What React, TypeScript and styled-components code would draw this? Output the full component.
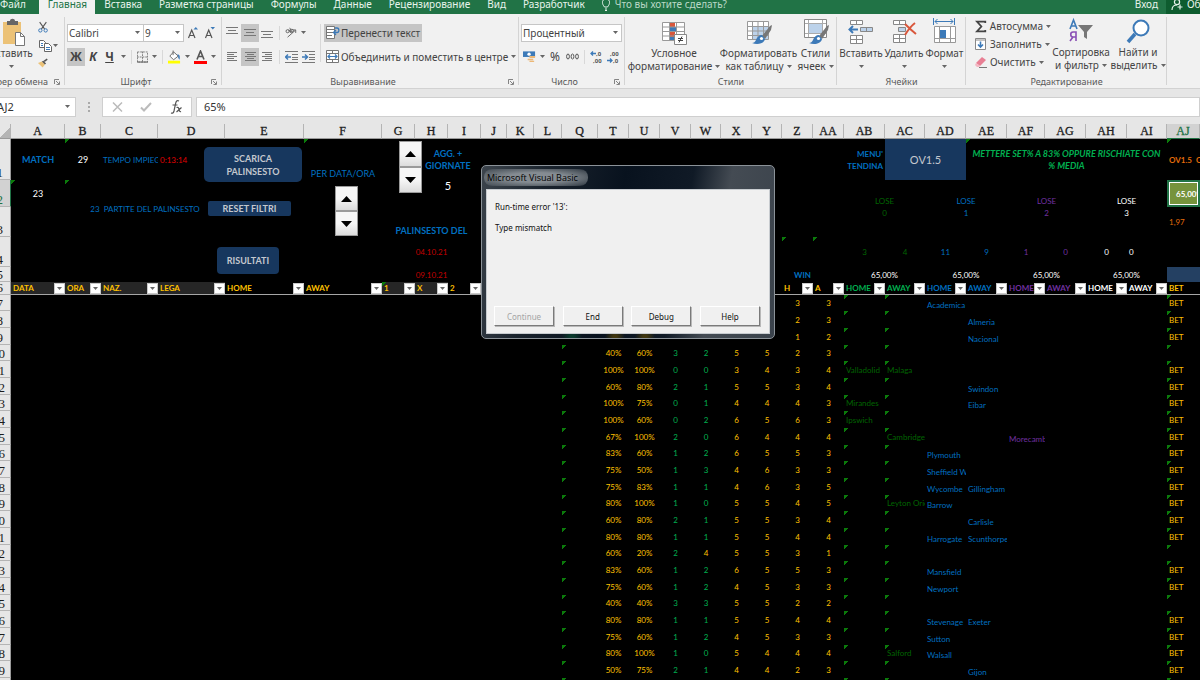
import React from "react";
import styled, { createGlobalStyle, css } from "styled-components";

const UI = '"Noto Sans", "Open Sans", sans-serif';
const CELL = 'Lato, "Open Sans", sans-serif';
const SERIF = '"Liberation Serif", serif';

const BLUE = "#0070c0";
const GREEN = "#00b050";
const DARK_GREEN = "#006400";
const GOLD = "#ffc000";
const PURPLE = "#7030a0";
const ORANGE = "#e26b0a";
const NAVY = "#17375e";

const GlobalStyle = createGlobalStyle`
  * { box-sizing: border-box; }
  body { margin: 0; background: #000; font-family: ${UI}; overflow: hidden; }
  button, input, select { font: inherit; color: inherit; margin: 0; }
`;

const Window = styled.div`
  position: relative;
  display: flex;
  flex-direction: column;
  height: 100vh;
  overflow: hidden;
  background: #000;
`;

/* ---------- tabs ---------- */

const TabBar = styled.nav`
  display: flex;
  flex: none;
  height: 14px;
  background: #217346;
  color: #e8f3ec;
  font-size: 10px;
  line-height: 8px;
`;

const Tab = styled.button<{ $active?: boolean }>`
  height: 14px;
  border: 0;
  padding: 0 8px 6px 9px;
  white-space: nowrap;
  background: ${(p) => (p.$active ? "#f1f1f1" : "transparent")};
  color: ${(p) => (p.$active ? "#217346" : "#e8f3ec")};
`;

const FileTab = styled(Tab)`
  padding: 0 13px 6px 0;
`;

const TellMe = styled(Tab)`
  display: flex;
  gap: 5px;
  color: #b9d8c6;
`;

const Spacer = styled.div`
  flex: 1;
`;

const Share = styled(Tab)`
  display: flex;
  gap: 4px;
  width: 34px;
  padding: 0 0 6px 5px;
  overflow: hidden;
  background: #0e5c2f;
  svg {
    flex: none;
  }
`;

/* ---------- ribbon ---------- */

const Ribbon = styled.div`
  display: flex;
  flex: none;
  height: 75px;
  background: #f1f1f1;
  border-bottom: 1px solid #d2d2d2;
  color: #444;
  font-size: 10px;
  overflow: hidden;
`;

const Group = styled.section<{ $w: number }>`
  display: flex;
  flex-direction: column;
  flex: none;
  width: ${(p) => p.$w}px;
  position: relative;
  padding: 0 2px;
  &::after {
    content: "";
    position: absolute;
    right: 0;
    top: 3px;
    bottom: 3px;
    width: 1px;
    background: #d4d4d4;
  }
`;

const GroupBody = styled.div<{ $top?: number; $gap?: number }>`
  display: flex;
  height: 61px;
  padding-top: ${(p) => p.$top ?? 10}px;
  gap: ${(p) => p.$gap ?? 0}px;
`;

const GroupLabel = styled.footer<{ $end?: boolean }>`
  display: flex;
  align-items: center;
  height: 13px;
  font-size: 9px;
  line-height: 13px;
  color: #5a5a5a;
  white-space: nowrap;
  span {
    flex: 1;
    min-width: 0;
    display: flex;
    justify-content: ${(p) => (p.$end ? "flex-end" : "center")};
  }
  svg {
    flex: none;
    margin: 0 3px 0 6px;
  }
`;

const Stack = styled.div<{ $gap?: number }>`
  display: flex;
  flex-direction: column;
  gap: ${(p) => p.$gap ?? 7}px;
`;

const ToolRow = styled.div`
  display: flex;
  align-items: center;
  height: 17px;
`;

const Tool = styled.button<{ $w?: number; $on?: boolean }>`
  display: flex;
  align-items: center;
  justify-content: center;
  gap: 1px;
  width: ${(p) => (p.$w ? p.$w + "px" : "auto")};
  height: 18px;
  padding: 0 2px;
  border: 0;
  background: ${(p) => (p.$on ? "#c5c5c5" : "transparent")};
  white-space: nowrap;
  flex: none;
`;

const CaretTool = styled(Tool)`
  padding: 0;
`;

const Glyph = styled.span<{ $bold?: boolean; $italic?: boolean; $under?: boolean }>`
  font-size: 12px;
  line-height: 12px;
  font-weight: ${(p) => (p.$bold ? 700 : 400)};
  font-style: ${(p) => (p.$italic ? "italic" : "normal")};
  text-decoration: ${(p) => (p.$under ? "underline" : "none")};
`;

const Divider = styled.i<{ $h?: number }>`
  width: 1px;
  height: ${(p) => p.$h ?? 14}px;
  margin: 0 3px;
  background: #d8d8d8;
  flex: none;
`;

const Combo = styled.label<{ $w: number }>`
  display: flex;
  align-items: center;
  width: ${(p) => p.$w}px;
  height: 18px;
  padding-right: 3px;
  border: 1px solid #c6c6c6;
  background: #fff;
  & + & {
    border-left: 0;
  }
  select {
    flex: 1;
    min-width: 0;
    appearance: none;
    border: 0;
    padding: 0 0 0 1px;
    background: transparent;
    outline: 0;
  }
`;

const BigTool = styled.button<{ $w: number }>`
  display: flex;
  flex-direction: column;
  align-items: center;
  flex: none;
  width: ${(p) => p.$w}px;
  height: 57px;
  padding: 0;
  border: 0;
  background: transparent;
  line-height: 13px;
  white-space: nowrap;
  svg.big {
    height: 28px;
    margin-bottom: 1px;
    flex: none;
  }
  span {
    display: flex;
    align-items: center;
    gap: 3px;
    min-height: 13px;
  }
`;

const PasteArea = styled.div`
  display: flex;
  justify-content: flex-end;
  width: 31px;
  flex: none;
`;

const EditButton = styled(Tool)`
  justify-content: flex-start;
  padding: 0;
  gap: 3px;
`;

/* ---------- formula bar ---------- */

const FormulaBar = styled.div`
  display: flex;
  align-items: center;
  flex: none;
  height: 35px;
  background: #e6e6e6;
  color: #333;
  font-size: 11px;
`;

const Box = styled.div<{ $w?: number }>`
  display: flex;
  align-items: center;
  height: 20px;
  border: 1px solid #cfcfcf;
  background: #fff;
  overflow: hidden;
  ${(p) => (p.$w ? css`flex: none; width: ${p.$w}px;` : css`flex: 1;`)}
  input {
    flex: 1;
    min-width: 0;
    border: 0;
    outline: 0;
    background: transparent;
    padding: 0 0 0 7px;
  }
`;

const NameBox = styled(Box)`
  border-left: 0;
  padding-right: 5px;
  input {
    padding: 0;
    text-indent: -3px;
  }
`;

const Dots = styled.div`
  display: flex;
  flex-direction: column;
  gap: 2px;
  width: 26px;
  align-items: center;
  i {
    width: 2px;
    height: 2px;
    background: #aaa;
  }
`;

const FxButtons = styled(Box)`
  justify-content: space-around;
  margin-right: 4px;
`;

/* ---------- sheet ---------- */

const Sheet = styled.main`
  position: relative;
  flex: 1;
  min-height: 0;
  overflow: hidden;
  background: #000;
`;

const Grid = styled.table`
  width: 100%;
  table-layout: fixed;
  border-collapse: separate;
  border-spacing: 0;
  font-family: ${CELL};
  font-size: 8px;
  line-height: 12px;
  color: ${GOLD};
`;

const ColHead = styled.th<{ $sel?: boolean }>`
  height: 15px;
  padding: 1px 0 0;
  overflow: hidden;
  font: 400 12px/13px ${SERIF};
  color: ${(p) => (p.$sel ? "#217346" : "#1c1c1c")};
  background: ${(p) => (p.$sel ? "#d2d2d2" : "#e6e6e6")};
  border-right: 1px solid #b4b4b4;
  border-bottom: 1px solid ${(p) => (p.$sel ? "#217346" : "#9a9a9a")};
  -webkit-text-stroke: 0.3px currentColor;
`;

const Corner = styled(ColHead)`
  background: linear-gradient(135deg, #e6e6e6 58%, #b4b4b4 58%);
`;

const RowHead = styled.th<{ $sel?: boolean }>`
  padding: 0;
  vertical-align: bottom;
  font: 400 13px/14px ${SERIF};
  color: ${(p) => (p.$sel ? "#217346" : "#1c1c1c")};
  background: ${(p) => (p.$sel ? "#d2d2d2" : "#e6e6e6")};
  border-bottom: 1px solid #b4b4b4;
  border-right: 1px solid ${(p) => (p.$sel ? "#217346" : "#9a9a9a")};
`;

const RowNumber = styled.div<{ $pad: number }>`
  display: flex;
  justify-content: flex-end;
  height: 12px;
  line-height: 12px;
  padding-right: ${(p) => p.$pad}px;
  overflow: hidden;
`;

type Look = {
  $c?: string;
  $bg?: string;
  $h?: "left" | "center" | "right";
  $v?: "top" | "middle" | "bottom";
  $bold?: boolean;
  $italic?: boolean;
  $size?: number;
  $flag?: boolean;
  $wrap?: boolean;
  $active?: boolean;
};

const Td = styled.td<Look>`
  padding: ${(p) => (p.$h ? "0 2px" : "0 0 0 2px")};
  overflow: hidden;
  white-space: ${(p) => (p.$wrap ? "pre-line" : "pre")};
  color: ${(p) => p.$c ?? GOLD};
  background-color: ${(p) => p.$bg ?? "transparent"};
  text-align: ${(p) => p.$h ?? "left"};
  vertical-align: ${(p) => p.$v ?? "middle"};
  font-weight: ${(p) => (p.$bold ? 700 : 400)};
  font-style: ${(p) => (p.$italic ? "italic" : "normal")};
  font-size: ${(p) => p.$size ?? 8}px;
  ${(p) => p.$flag && css`background-image: linear-gradient(135deg, #0b7a0b 3px, transparent 3px);`}
  ${(p) => p.$active && css`border: 2px solid #217346; box-shadow: inset 0 0 0 1px #fff; padding-left: 7px;`}
`;

const Tr = styled.tr<{ $h: number }>`
  height: ${(p) => p.$h}px;
`;

const FilterTh = styled.th<{ $c?: string; $shade?: boolean; $flag?: boolean }>`
  padding: 0;
  overflow: hidden;
  color: ${(p) => p.$c ?? GOLD};
  background-color: ${(p) => (p.$shade ? "#262626" : "#000")};
  border-bottom: 1px solid #a6a6a6;
  font-size: 8px;
  font-weight: 700;
  ${(p) => p.$flag && css`background-image: linear-gradient(135deg, #0b7a0b 3px, transparent 3px);`}
  div {
    display: flex;
    justify-content: space-between;
    align-items: center;
    height: 12px;
    padding-left: 2px;
    white-space: nowrap;
  }
`;

const FilterButton = styled.button`
  display: flex;
  align-items: center;
  justify-content: center;
  flex: none;
  width: 11px;
  height: 11px;
  padding: 0;
  border: 1px solid #c8c8c8;
  background: #fff;
`;

const Shape = styled.button<{ $x: number; $y: number; $w: number; $h: number; $r: number }>`
  position: absolute;
  left: ${(p) => p.$x}px;
  top: ${(p) => p.$y}px;
  width: ${(p) => p.$w}px;
  height: ${(p) => p.$h}px;
  padding: 0;
  border: 0;
  border-radius: ${(p) => p.$r}px;
  background: ${NAVY};
  color: #c4c8ce;
  font: 700 9px/13px ${CELL};
  white-space: pre-line;
`;

const Spinner = styled.div<{ $x: number; $y: number; $h: number }>`
  position: absolute;
  left: ${(p) => p.$x}px;
  top: ${(p) => p.$y}px;
  display: flex;
  flex-direction: column;
  width: 23px;
  height: ${(p) => p.$h}px;
  button {
    flex: 1;
    display: flex;
    align-items: center;
    justify-content: center;
    padding: 0;
    border: 1px solid #9a9a9a;
    background: linear-gradient(#f6f6f6 50%, #dcdcdc);
  }
`;

/* ---------- dialog ---------- */

const Dialog = styled.div`
  position: absolute;
  left: 481px;
  top: 165px;
  width: 294px;
  display: flex;
  flex-direction: column;
  padding: 0 4px 4px;
  border: 1px solid #8b9298;
  border-radius: 5px;
  background:
    radial-gradient(circle at 90px 171px, #0a3a2c 0 2px, transparent 10px),
    radial-gradient(circle at 133px 171px, #40360f 0 2px, transparent 10px),
    radial-gradient(circle at 163px 171px, #40360f 0 2px, transparent 10px),
    linear-gradient(100deg, #3c444c 0, #1a232d 20%, #08121e 45%, #101a26 66%, #444b53 78%, #3a424b 100%);
  color: #111;
  font-family: ${UI};
  font-size: 8px;
`;

const DialogTitle = styled.h1`
  align-self: flex-start;
  margin: 3px 0 3px -2px;
  padding: 0 10px 0 3px;
  border-radius: 8px;
  font: 400 9px/17px "Open Sans", sans-serif;
  color: #000;
  background: radial-gradient(ellipse at center, #858c92 40%, rgba(100, 108, 115, 0.6) 85%, transparent);
`;

const DialogBody = styled.div`
  display: flex;
  flex-direction: column;
  height: 145px;
  padding: 11px 9px 7px 7px;
  border: 1px solid #c8ccd0;
  background: #f0f0f0;
  p {
    margin: 0 0 10px;
    line-height: 12px;
    padding-left: 1px;
    &:first-child {
      margin-bottom: 9px;
    }
  }
`;

const DialogButtons = styled.div`
  display: flex;
  justify-content: space-between;
  margin-top: auto;
`;

const DialogButton = styled.button`
  width: 60px;
  height: 20px;
  padding: 0;
  border: 1px solid;
  border-color: #fff #7a7a7a #7a7a7a #fff;
  box-shadow: 1px 1px 0 #b8b8b8;
  background: #f0f0f0;
  &:disabled {
    color: #a5a5a5;
  }
`;

/* ---------- icons ---------- */

const Caret = () => (
  <svg width="5" height="3" viewBox="0 0 5 3">
    <path d="M0 0h5L2.5 3z" fill="#666" />
  </svg>
);

const Launcher = () => (
  <svg width="6" height="6" viewBox="0 0 6 6" fill="none" stroke="#777">
    <path d="M.5 5V.5H5M2 2l3 3M5.500 2.500v3h-3" strokeWidth=".9" />
  </svg>
);

const Lines = ({ rows }: { rows: [number, number, number][] }) => (
  <svg width="13" height="13" viewBox="0 0 13 13" stroke="#777">
    {rows.map(([x1, x2, y]) => (
      <path key={y} d={`M${x1} ${y + 0.5}H${x2}`} />
    ))}
  </svg>
);

const Brush = () => (
  <g>
    <path d="M27 7l-2 1-8 10 3 3 6-9z" fill="#777" />
    <path d="M17 17c-3 0-5 2-6 5-1 2-2 3-4 3 5 2 12 1 13-4z" fill="#3d7ab8" />
    <circle cx="16.500" cy="20.500" r="1.600" fill="#fff" />
  </g>
);

const PasteIcon = () => (
  <svg className="big" width="30" height="28" viewBox="-5 0 30 28">
    <path d="M2 4h18v22H2z" fill="#ecc277" />
    <path d="M6 7V3h3c0-3 5-3 5 0h3v4z" fill="#666" />
    <path d="M14.500 14.500h5l4 4v9h-9z" fill="#fff" stroke="#777" />
    <path d="M19.500 14.500v4h4" fill="none" stroke="#777" />
  </svg>
);

const Scissors = () => (
  <svg width="12" height="13" viewBox="0 0 12 13" fill="none">
    <path d="M2 0l6 8.500M10 0L4 8.500" stroke="#555" strokeWidth="1.300" />
    <circle cx="2.800" cy="10" r="2" stroke="#3d7ab8" strokeWidth="1.200" />
    <circle cx="9.200" cy="10" r="2" stroke="#3d7ab8" strokeWidth="1.200" />
  </svg>
);

const CopyIcon = () => (
  <svg width="13" height="13" viewBox="0 0 13 13" fill="#fff" stroke="#666">
    <path d="M.5 1.500h4l2 2v5h-6z" />
    <path d="M5.500 4.500h4l3 3v5h-7z" />
    <path d="M2 4.500h2M2 6.500h2M7 8.500h4M7 10.500h4" stroke="#3d7ab8" />
  </svg>
);

const Painter = () => (
  <svg width="13" height="12" viewBox="0 0 13 12">
    <path d="M0 6l5-2 4 4-3 4z" fill="#ecc277" />
    <path d="M5 4l2-1 3.500 3.500L9 8z" fill="#555" />
    <path d="M8 4l4-3" stroke="#555" strokeWidth="2" />
  </svg>
);

const BordersIcon = () => (
  <svg width="12" height="12" viewBox="0 0 12 12" fill="none" stroke="#777">
    <path d="M.5.5h11v11H.5zM6 0v12M0 6h12" strokeDasharray="2 1" />
    <path d="M0 11.500h12" stroke="#555" />
  </svg>
);

const FillIcon = () => (
  <svg width="14" height="14" viewBox="0 0 14 14">
    <path d="M6 1.500l5 4.500-5 4-4-4z" fill="#fff" stroke="#666" />
    <path d="M5.500 0v5" stroke="#666" />
    <path d="M10 4c3 0 3 3 2.500 6-1.500-1-2-3-1.500-4z" fill="#3d7ab8" />
    <path d="M0 11h13v3H0z" fill="#ff0" />
  </svg>
);

const FontColorIcon = () => (
  <svg width="13" height="14" viewBox="0 0 13 14">
    <path d="M3 9.500L6.500 1 10 9.500M4.300 6.500h4.400" fill="none" stroke="#555" strokeWidth="1.600" />
    <path d="M0 11h13v3H0z" fill="#f00" />
  </svg>
);

const SizeIcon = ({ up }: { up?: boolean }) => (
  <svg width="12" height="12" viewBox="0 0 12 12">
    <path d="M1.500 11L4.700 3 8 11M2.700 8.500h4" fill="none" stroke="#555" strokeWidth="1.200" />
    <path d={up ? "M6.500 2.500h4.500L8.800 0z" : "M6.500 0h4.500L8.800 2.500z"} fill="#3d7ab8" />
  </svg>
);

const Orientation = () => (
  <svg width="14" height="13" viewBox="0 0 14 13" fill="none" stroke="#555">
    <circle cx="3" cy="5" r="1.800" />
    <path d="M4.500 3L6.500 7M5.500 1l3 5.500" />
    <circle cx="8" cy="4.500" r="1.800" />
    <path d="M3 12l9-8M12.500 7V3.500H9" />
  </svg>
);

const Indent = ({ right }: { right?: boolean }) => (
  <svg width="13" height="12" viewBox="0 0 13 12" fill="none">
    <path d="M0 .5h13M7 3.500h6M7 6.500h6M7 8.500h6M0 11.500h13" stroke="#777" />
    <path d={right ? "M0 6h5M3 3.500L5.500 6 3 8.500" : "M6 6H1M3 3.500L.5 6 3 8.500"} stroke="#3d7ab8" strokeWidth="1.500" />
  </svg>
);

const WrapIcon = () => (
  <svg width="14" height="13" viewBox="0 0 14 13" fill="none">
    <path d="M.5.5h8v12h-8z" fill="#fff" stroke="#777" />
    <path d="M1 3.500h8M1 6.500h7M1 9.500h5" stroke="#777" />
    <path d="M9 2h2c2.500 0 2.500 4.500 0 4.500H8M10 4L7.500 6.500 10 9" stroke="#3d7ab8" strokeWidth="1.300" />
  </svg>
);

const MergeIcon = () => (
  <svg width="14" height="13" viewBox="0 0 14 13" fill="none">
    <path d="M.5.5h12v12H.5zM.5 3.500h12M.5 9.500h12M6.500 0v3.500M6.500 9.500v3" fill="#fff" stroke="#777" />
    <path d="M2 6.500h9M4 4.500L2 6.500l2 2M9 4.500l2 2-2 2" stroke="#3d7ab8" strokeWidth="1.200" />
  </svg>
);

const MoneyIcon = () => (
  <svg width="14" height="13" viewBox="0 0 14 13">
    <path d="M0 1h13v6H0z" fill="#3d7ab8" />
    <circle cx="6.500" cy="4" r="1.800" fill="#fff" />
    <path d="M7 6h6v2H7zM5 9h6v1.500H5zM7 11h5v1.500H7z" fill="#ecb877" />
  </svg>
);

const DigitText = styled.text`
  font: 700 6px ${UI};
  fill: #555;
`;

const Decimal = ({ less }: { less?: boolean }) => (
  <svg width="13" height="14" viewBox="0 0 13 14">
    <DigitText x={less ? 3 : 6} y="6">{less ? ",00" : ",0"}</DigitText>
    <DigitText x={less ? 6 : 3} y="13">{less ? ",0" : ",00"}</DigitText>
    <path
      d={less ? "M0 10.500h5M3 8.500l2 2-2 2" : "M6 3.500H1M3 1.500l-2 2 2 2"}
      fill="none"
      stroke="#3d7ab8"
      strokeWidth="1.300"
    />
  </svg>
);

const ConditionalIcon = () => (
  <svg className="big" width="27" height="28" viewBox="0 0 27 28">
    <path d="M1.500 4.500h22v18h-22z" fill="#fff" />
    <path d="M9 4h5v5H9zM9 14h5v5H9z" fill="#d9573c" />
    <path d="M9 9h7v5H9zM9 19h4v4H9z" fill="#3d7ab8" />
    <path d="M1.500 4.500h22v18h-22zM8.500 4v19M15.500 4v19M1 9h22M1 13.500h22M1 18h22" fill="none" stroke="#999" />
    <path d="M13.500 16.500h12v10h-12z" fill="#fff" stroke="#888" />
    <path d="M17 20.500h5M17 22.500h5M21 18.500l-3 6" stroke="#444" />
  </svg>
);

const TableIcon = () => (
  <svg className="big" width="28" height="28" viewBox="0 0 28 28">
    <path d="M2.500 3.500h21v18h-21z" fill="#fff" />
    <path d="M8 9h15v12H8z" fill="#bcd2ea" />
    <path d="M2.500 3.500h21v18h-21zM7.500 3v18M13 3v18M18.500 3v18M2 8.500h21M2 13h21M2 17.500h21" fill="none" stroke="#999" />
    <Brush />
  </svg>
);

const StylesIcon = () => (
  <svg className="big" width="28" height="28" viewBox="0 0 28 28">
    <path d="M2.500 1.500h22v18h-22z" fill="#fff" stroke="#888" />
    <path d="M6.500 2v17M20.500 2v17M3 5.500h21M3 15.500h21" stroke="#aaa" />
    <path d="M7 6h13v9H7z" fill="#bcd2ea" />
    <Brush />
  </svg>
);

const InsertIcon = () => (
  <svg className="big" width="26" height="28" viewBox="0 0 26 28" fill="none">
    <path d="M2.500 2.500h12v4h-12zM8.500 2v5" fill="#fff" stroke="#888" />
    <path d="M12.500 9.500h12v4h-12zM18.500 9v5" fill="#bcd2ea" stroke="#888" />
    <path d="M2.500 17.500h12v8h-12zM8.500 17v9M2 21.500h13" fill="#fff" stroke="#888" />
    <path d="M10 11.500H2M5 8l-3.500 3.500L5 15" stroke="#3d7ab8" strokeWidth="2" />
  </svg>
);

const DeleteIcon = () => (
  <svg className="big" width="26" height="28" viewBox="0 0 26 28" fill="none">
    <path d="M2.500 2.500h12v4h-12zM8.500 2v5" fill="#fff" stroke="#888" />
    <path d="M7.500 9.500h7v4h-7z" fill="#bcd2ea" stroke="#888" />
    <path d="M2.500 16.500h12v8h-12zM8.500 16v9M2 20.500h13" fill="#fff" stroke="#888" />
    <path d="M14 6c3 3 6 6 11 10M24 5c-4 3-7 7-10 12" stroke="#d9573c" strokeWidth="2" />
  </svg>
);

const FormatIcon = () => (
  <svg className="big" width="24" height="28" viewBox="0 0 24 28" fill="none">
    <path d="M2 3.500h18M4.500 1L2 3.500 4.500 6M17.500 1L20 3.500 17.500 6M.5 0v7M21.500 0v7" stroke="#3d7ab8" />
    <path d="M1.500 8.500h21v16h-21zM6.500 8v16M17.500 8v16M1 20.500h22" fill="#fff" stroke="#999" />
    <path d="M7 12h6v8H7z" fill="#3d7ab8" />
  </svg>
);

const SortIcon = () => (
  <svg className="big" width="26" height="28" viewBox="0 0 26 28" fill="none">
    <path d="M2 12L5.500 3 9 12M3.500 9h4" stroke="#3d7ab8" strokeWidth="1.600" />
    <path d="M8 24v-9H5c-3 0-3 5 0 5h3M5 20l-3 4" stroke="#8a4fb5" strokeWidth="1.600" />
    <path d="M10 8h15l-6 7v7l-3-2v-5z" fill="#777" />
  </svg>
);

const FindIcon = () => (
  <svg className="big" width="26" height="28" viewBox="0 0 26 28" fill="none">
    <circle cx="16" cy="11" r="7.500" fill="#fff" stroke="#3d7ab8" strokeWidth="2" />
    <path d="M10 17l-7 8" stroke="#3d7ab8" strokeWidth="3.500" />
  </svg>
);

const SumIcon = () => (
  <svg width="12" height="13" viewBox="0 0 12 13" fill="none">
    <path d="M10.500 3V1.500H2L6.500 6.500 2 11.500h8.500V10" stroke="#444" strokeWidth="1.800" />
  </svg>
);

const DownIcon = () => (
  <svg width="12" height="12" viewBox="0 0 12 12" fill="none">
    <path d="M.5.5h10v11H.5z" fill="#fff" stroke="#888" />
    <path d="M.5 2h10" stroke="#888" />
    <path d="M5.500 3.500V9M3 6.500L5.500 9 8 6.500" stroke="#3d7ab8" strokeWidth="1.600" />
  </svg>
);

const EraserIcon = () => (
  <svg width="12" height="12" viewBox="0 0 12 12">
    <path d="M1 7l6-6 4 3-6 6z" fill="#e87f94" />
    <path d="M1 7l4 3-1 1H2L0 9z" fill="#f4b6c2" />
    <path d="M4 11.500h8" stroke="#777" />
  </svg>
);

const Bulb = () => (
  <svg width="8" height="11" viewBox="0 0 8 11" fill="none" stroke="#e8f3ec">
    <path d="M2.500 7C1 5 .5 4 .5 2.500-.5-2 8.500-2 7.500 2.500 7.500 4 7 5 5.500 7zM3 9h2M3 10.500h2" />
  </svg>
);

const Person = () => (
  <svg width="12" height="10" viewBox="0 0 12 10" fill="none" stroke="#e8f3ec" strokeWidth="1.200">
    <circle cx="6" cy="2" r="2.600" />
    <path d="M1 10c0-3 2-5 5-5M9 4.500v5M6.500 7h5" />
  </svg>
);

const Arrow = ({ down }: { down?: boolean }) => (
  <svg width="11" height="6" viewBox="0 0 11 6">
    <path d={down ? "M0 0h11L5.500 6z" : "M0 6h11L5.500 0z"} />
  </svg>
);

/* ---------- data ---------- */

const COLUMNS: [string, number][] = [
  ["A", 54], ["B", 36], ["C", 57], ["D", 67], ["E", 79], ["F", 78], ["G", 33], ["H", 33], ["I", 33],
  ["J", 26], ["K", 27], ["L", 28], ["Q", 36], ["T", 31], ["U", 31], ["V", 31], ["W", 30], ["X", 31],
  ["Y", 30], ["Z", 31], ["AA", 31], ["AB", 41], ["AC", 40], ["AD", 41], ["AE", 41], ["AF", 38],
  ["AG", 41], ["AH", 41], ["AI", 40], ["AJ", 0],
];

const NAMES = COLUMNS.map(([name]) => name);

type CellSpec = Look & { at: string; span?: number; rows?: number; covered?: boolean; text?: string };

const blue = (at: string, text: string, extra: Partial<CellSpec> = {}): CellSpec => ({
  at, text, $c: BLUE, $h: "center", ...extra,
});

const TOP_ROWS: { h: number; cells: CellSpec[] }[] = [
  {
    h: 41,
    cells: [
      blue("A", "MATCH", { $bold: true, $size: 9 }),
      { at: "B", text: "29", $c: "#fff", $h: "center", $flag: true, $size: 9 },
      { at: "C", text: "TEMPO IMPIEG", $c: BLUE },
      { at: "D", text: "0:13:14", $c: "#e00000" },
      blue("F", "PER DATA/ORA", { $v: "bottom", $flag: true, $size: 9 }),
      blue("H", "AGG. +\nGIORNATE", { span: 2, $bold: true, $wrap: true, $size: 9 }),
      blue("AB", "MENU'\nTENDINA", { $h: "right", $bold: true, $wrap: true }),
      { at: "AC", span: 2, text: "OV1.5", $bg: NAVY, $c: "#c4c8ce", $h: "center", $size: 11 },
      {
        at: "AE", span: 5, text: "METTERE SET% A 83% OPPURE RISCHIATE CON\n% MEDIA",
        $c: GREEN, $h: "center", $bold: true, $italic: true, $wrap: true, $flag: true, $size: 9,
      },
      { at: "AJ", text: "OV1.5  OV2.5", $c: ORANGE, $bold: true, $flag: true },
    ],
  },
  {
    h: 27,
    cells: [
      { at: "A", text: "23", $c: "#fff", $h: "center", $flag: true, $size: 9 },
      blue("B", "23  PARTITE DEL PALINSESTO", { span: 3, rows: 2, $flag: true }),
      { at: "H", span: 2, text: "5", $c: "#fff", $h: "center", $v: "top", $size: 11 },
      { at: "AB", span: 2, text: "LOSE", $c: DARK_GREEN, $h: "center", $v: "bottom" },
      blue("AD", "LOSE", { span: 2, $v: "bottom" }),
      { at: "AF", span: 2, text: "LOSE", $c: PURPLE, $h: "center", $v: "bottom" },
      { at: "AH", span: 2, text: "LOSE", $c: "#fff", $h: "center", $v: "bottom" },
      { at: "AJ", text: "65,00%", $bg: "#76933c", $c: "#fff", $bold: true, $active: true },
    ],
  },
  {
    h: 30,
    cells: [
      { at: "B", span: 3, covered: true },
      blue("G", "PALINSESTO DEL", { span: 3, $bold: true, $v: "bottom", $size: 9 }),
      { at: "AB", span: 2, text: "0", $c: DARK_GREEN, $h: "center", $v: "top" },
      blue("AD", "1", { span: 2, $v: "top" }),
      { at: "AF", span: 2, text: "2", $c: PURPLE, $h: "center", $v: "top" },
      { at: "AH", span: 2, text: "3", $c: "#fff", $h: "center", $v: "top" },
      { at: "AJ", text: "1,97", $c: ORANGE },
    ],
  },
  {
    h: 30,
    cells: [
      { at: "G", span: 3, text: "04.10.21", $c: "#c00000", $h: "center" },
      { at: "Z", $flag: true },
      { at: "AA", $flag: true },
      { at: "AB", text: "3", $c: DARK_GREEN, $h: "center" },
      { at: "AC", text: "4", $c: DARK_GREEN, $h: "center" },
      blue("AD", "11"),
      blue("AE", "9"),
      { at: "AF", text: "1", $c: PURPLE, $h: "center" },
      { at: "AG", text: "0", $c: PURPLE, $h: "center" },
      { at: "AH", text: "0", $c: "#fff", $h: "center" },
      { at: "AI", text: "0", $c: "#fff" },
    ],
  },
  {
    h: 15,
    cells: [
      { at: "G", span: 3, text: "09.10.21", $c: "#c00000", $h: "center" },
      { at: "Z", text: "WIN", $c: BLUE, $bold: true, $h: "right" },
      { at: "AB", span: 2, text: "65,00%", $c: "#fff", $h: "center" },
      { at: "AD", span: 2, text: "65,00%", $c: "#fff", $h: "center" },
      { at: "AF", span: 2, text: "65,00%", $c: "#fff", $h: "center" },
      { at: "AH", span: 2, text: "65,00%", $c: "#fff", $h: "center" },
      { at: "AJ", $bg: "#244062" },
    ],
  },
];

const FILTERS: Record<string, { label: string; c?: string; shade?: boolean; flag?: boolean }> = {
  A: { label: "DATA", shade: true },
  B: { label: "ORA", shade: true },
  C: { label: "NAZ.", shade: true },
  D: { label: "LEGA", shade: true },
  E: { label: "HOME" },
  F: { label: "AWAY" },
  G: { label: "1", shade: true, flag: true },
  H: { label: "X", shade: true },
  I: { label: "2" },
  Y: { label: "" },
  Z: { label: "H" },
  AA: { label: "A" },
  AB: { label: "HOME", c: GREEN },
  AC: { label: "AWAY", c: GREEN },
  AD: { label: "HOME", c: BLUE },
  AE: { label: "AWAY", c: BLUE },
  AF: { label: "HOME", c: PURPLE },
  AG: { label: "AWAY", c: PURPLE },
  AH: { label: "HOME", c: "#fff" },
  AI: { label: "AWAY", c: "#fff" },
  AJ: { label: "BET" },
};

const STAT_COLS = ["T", "U", "V", "W", "X", "Y", "Z", "AA"];

const DATA: { stats: string; teams?: Record<string, string>; noBet?: boolean }[] = [
  { stats: "- - - - - - 3 3", teams: { AD: "Academica" } },
  { stats: "- - - - - - 2 3", teams: { AE: "Almeria" } },
  { stats: "- - - - - - 1 2", teams: { AE: "Nacional" } },
  { stats: "40% 60% 3 2 5 5 2 3", noBet: true },
  { stats: "100% 100% 0 0 3 4 3 4", teams: { AB: "Valladolid", AC: "Malaga" } },
  { stats: "60% 80% 2 1 5 5 3 4", teams: { AE: "Swindon" } },
  { stats: "100% 75% 0 1 4 4 4 3", teams: { AB: "Mirandes", AE: "Eibar" } },
  { stats: "100% 60% 0 2 6 5 6 3", teams: { AB: "Ipswich" } },
  { stats: "67% 100% 2 0 6 4 4 4", teams: { AC: "Cambridge", AF: "Morecambe" } },
  { stats: "83% 60% 1 2 6 5 5 3", teams: { AD: "Plymouth" } },
  { stats: "75% 50% 1 3 4 6 3 3", teams: { AD: "Sheffield W" } },
  { stats: "75% 83% 1 1 4 6 3 5", teams: { AD: "Wycombe", AE: "Gillingham" } },
  { stats: "80% 100% 1 0 5 5 4 5", teams: { AC: "Leyton Orient", AD: "Barrow" } },
  { stats: "60% 80% 2 1 5 5 3 4", teams: { AE: "Carlisle" } },
  { stats: "80% 80% 1 1 5 5 4 4", teams: { AD: "Harrogate", AE: "Scunthorpe" } },
  { stats: "60% 20% 2 4 5 5 3 1", noBet: true },
  { stats: "83% 60% 1 2 6 5 5 3", teams: { AD: "Mansfield" } },
  { stats: "75% 60% 1 2 4 5 3 3", teams: { AD: "Newport" } },
  { stats: "40% 40% 3 3 5 5 2 2", noBet: true },
  { stats: "80% 80% 1 1 5 5 4 4", teams: { AD: "Stevenage", AE: "Exeter" } },
  { stats: "75% 60% 1 2 4 5 3 3", teams: { AD: "Sutton" } },
  { stats: "80% 100% 1 0 5 4 4 4", teams: { AC: "Salford", AD: "Walsall" } },
  { stats: "50% 75% 2 1 4 4 2 3", teams: { AE: "Gijon" } },
  { stats: "- - - - - - - -", noBet: true },
];

/* ---------- pieces ---------- */

function Header({ n }: { n: number }) {
  return (
    <RowHead scope="row" $sel={n === 2}>
      <RowNumber $pad={n < 10 ? 7 : 5}>{n}</RowNumber>
    </RowHead>
  );
}

function TopRow({ n, h, cells }: { n: number; h: number; cells: CellSpec[] }) {
  const out: React.ReactNode[] = [];
  let col = 0;
  cells.forEach(({ at, span = 1, rows, covered, text, ...look }) => {
    const index = NAMES.indexOf(at);
    if (index > col) out.push(<td key={"gap" + col} colSpan={index - col} />);
    if (!covered)
      out.push(
        <Td key={at} colSpan={span} rowSpan={rows} {...look}>
          {text}
        </Td>
      );
    col = index + span;
  });
  return (
    <Tr $h={h}>
      <Header n={n} />
      {out}
    </Tr>
  );
}

function DataRow({ index }: { index: number }) {
  const { stats, teams = {}, noBet } = DATA[index];
  const values = stats.split(" ");
  return (
    <Tr $h={index % 3 === 0 ? 16 : 17}>
      <Header n={index + 7} />
      {NAMES.map((name) => {
        const s = STAT_COLS.indexOf(name);
        if (s >= 0) {
          const v = values[s];
          const green = (name === "V" || name === "W") && v !== "4";
          return (
            <Td key={name} $h="center" $c={green ? GREEN : GOLD}>
              {v === "-" ? "" : v}
            </Td>
          );
        }
        if (name === "AB" || name === "AC")
          return <Td key={name} $flag $c={DARK_GREEN}>{teams[name]}</Td>;
        if (name === "AJ") return <Td key={name} $flag>{noBet ? "" : "BET"}</Td>;
        return (
          <Td key={name} $flag={name === "Q"} $v="bottom" $c={name === "AF" ? PURPLE : BLUE}>
            {teams[name]}
          </Td>
        );
      })}
    </Tr>
  );
}

function SheetGrid() {
  return (
    <Grid>
      <colgroup>
        <col width={11} />
        {COLUMNS.map(([name, w]) => (
          <col key={name} width={w || undefined} />
        ))}
      </colgroup>
      <thead>
        <tr>
          <Corner />
          {NAMES.map((name) => (
            <ColHead key={name} scope="col" $sel={name === "AJ"}>{name}</ColHead>
          ))}
        </tr>
      </thead>
      <tbody>
        {TOP_ROWS.map((row, i) => (
          <TopRow key={i} n={i + 1} h={row.h} cells={row.cells} />
        ))}
        <Tr $h={13}>
          <Header n={6} />
          {NAMES.map((name) => {
            const f = FILTERS[name];
            return (
              <FilterTh key={name} $c={f?.c} $shade={f?.shade} $flag={f?.flag}>
                {f && (
                  <div>
                    {f.label}
                    {name !== "AJ" && (
                      <FilterButton aria-label={"Filter " + f.label}>
                        <Caret />
                      </FilterButton>
                    )}
                  </div>
                )}
              </FilterTh>
            );
          })}
        </Tr>
        {DATA.map((_, i) => (
          <DataRow key={i} index={i} />
        ))}
      </tbody>
    </Grid>
  );
}

function RibbonGroups() {
  return (
    <Ribbon>
      <Group $w={65}>
        <GroupBody $top={4} $gap={3}>
          <PasteArea>
            <BigTool $w={44}>
              <PasteIcon />
              <span>Вставить</span>
              <span><Caret /></span>
            </BigTool>
          </PasteArea>
          <Stack $gap={0}>
            <Tool $w={14} aria-label="Вырезать"><Scissors /></Tool>
            <Tool $w={24} aria-label="Копировать"><CopyIcon /><Caret /></Tool>
            <Tool $w={14} aria-label="Формат по образцу"><Painter /></Tool>
          </Stack>
        </GroupBody>
        <GroupLabel $end><span>Буфер обмена</span><Launcher /></GroupLabel>
      </Group>

      <Group $w={157}>
        <GroupBody>
          <Stack>
            <ToolRow>
              <Combo $w={77}>
                <select aria-label="Шрифт"><option>Calibri</option></select>
                <Caret />
              </Combo>
              <Combo $w={40}>
                <select aria-label="Размер шрифта"><option>9</option></select>
                <Caret />
              </Combo>
              <Tool $w={18} aria-label="Увеличить размер"><SizeIcon up /></Tool>
              <Tool $w={16} aria-label="Уменьшить размер"><SizeIcon /></Tool>
            </ToolRow>
            <ToolRow>
              <Tool $w={18} $on><Glyph $bold>Ж</Glyph></Tool>
              <Tool $w={16}><Glyph $bold $italic>К</Glyph></Tool>
              <Tool $w={17}><Glyph $bold $under>Ч</Glyph></Tool>
              <CaretTool $w={10} aria-label="Подчёркивание"><Caret /></CaretTool>
              <Divider />
              <Tool $w={15} aria-label="Границы"><BordersIcon /></Tool>
              <CaretTool $w={9} aria-label="Все границы"><Caret /></CaretTool>
              <Divider />
              <Tool $w={17} aria-label="Цвет заливки"><FillIcon /></Tool>
              <CaretTool $w={9} aria-label="Все заливки"><Caret /></CaretTool>
              <Tool $w={17} aria-label="Цвет текста"><FontColorIcon /></Tool>
              <CaretTool $w={9} aria-label="Все цвета"><Caret /></CaretTool>
            </ToolRow>
          </Stack>
        </GroupBody>
        <GroupLabel><span>Шрифт</span><Launcher /></GroupLabel>
      </Group>

      <Group $w={297}>
        <GroupBody>
          <Stack>
            <ToolRow>
              <Tool $w={17} aria-label="По верхнему краю"><Lines rows={[[0, 12, 1], [2, 10, 4], [0, 12, 7]]} /></Tool>
              <Tool $w={18} $on aria-label="По середине"><Lines rows={[[0, 12, 3], [2, 10, 6], [0, 12, 9]]} /></Tool>
              <Tool $w={17} aria-label="По нижнему краю"><Lines rows={[[0, 12, 5], [2, 10, 8], [0, 12, 11]]} /></Tool>
              <Divider />
              <Tool $w={16} aria-label="Ориентация"><Orientation /></Tool>
              <CaretTool $w={8} aria-label="Все ориентации"><Caret /></CaretTool>
            </ToolRow>
            <ToolRow>
              <Tool $w={17} aria-label="По левому краю"><Lines rows={[[1, 11, 2], [1, 8, 4], [1, 11, 6], [1, 8, 8], [1, 11, 10]]} /></Tool>
              <Tool $w={18} $on aria-label="По центру"><Lines rows={[[1, 12, 2], [3, 10, 4], [1, 12, 6], [3, 10, 8], [1, 12, 10]]} /></Tool>
              <Tool $w={17} aria-label="По правому краю"><Lines rows={[[1, 11, 2], [4, 11, 4], [1, 11, 6], [4, 11, 8], [1, 11, 10]]} /></Tool>
              <Divider />
              <Tool $w={17} aria-label="Уменьшить отступ"><Indent /></Tool>
              <Tool $w={17} aria-label="Увеличить отступ"><Indent right /></Tool>
            </ToolRow>
          </Stack>
          <Divider $h={38} />
          <Stack>
            <ToolRow><Tool $on><WrapIcon />Перенести текст</Tool></ToolRow>
            <ToolRow>
              <Tool><MergeIcon />Объединить и поместить в центре</Tool>
              <CaretTool $w={6} aria-label="Варианты объединения"><Caret /></CaretTool>
            </ToolRow>
          </Stack>
        </GroupBody>
        <GroupLabel><span>Выравнивание</span><Launcher /></GroupLabel>
      </Group>

      <Group $w={106}>
        <GroupBody>
          <Stack>
            <ToolRow>
              <Combo $w={101}>
                <select aria-label="Числовой формат"><option>Процентный</option></select>
                <Caret />
              </Combo>
            </ToolRow>
            <ToolRow>
              <Tool $w={17} aria-label="Финансовый формат"><MoneyIcon /></Tool>
              <CaretTool $w={9} aria-label="Валюты"><Caret /></CaretTool>
              <Tool $w={16}><Glyph>%</Glyph></Tool>
              <Tool $w={18} aria-label="Разделитель тысяч">
                <svg width="13" height="7" viewBox="0 0 13 7" fill="none" stroke="#555">
                  <ellipse cx="2" cy="3.500" rx="1.400" ry="2.500" />
                  <ellipse cx="6.500" cy="3.500" rx="1.400" ry="2.500" />
                  <ellipse cx="11" cy="3.500" rx="1.400" ry="2.500" />
                </svg>
              </Tool>
              <Divider />
              <Tool $w={17} aria-label="Увеличить разрядность"><Decimal /></Tool>
              <Tool $w={17} aria-label="Уменьшить разрядность"><Decimal less /></Tool>
            </ToolRow>
          </Stack>
        </GroupBody>
        <GroupLabel><span>Число</span><Launcher /></GroupLabel>
      </Group>

      <Group $w={212}>
        <GroupBody $top={4}>
          <BigTool $w={94}>
            <ConditionalIcon />
            <span>Условное</span>
            <span>форматирование<Caret /></span>
          </BigTool>
          <BigTool $w={75}>
            <TableIcon />
            <span>Форматировать</span>
            <span>как таблицу<Caret /></span>
          </BigTool>
          <BigTool $w={39}>
            <StylesIcon />
            <span>Стили</span>
            <span>ячеек<Caret /></span>
          </BigTool>
        </GroupBody>
        <GroupLabel><span>Стили</span></GroupLabel>
      </Group>

      <Group $w={129}>
        <GroupBody $top={4}>
          <BigTool $w={44}><InsertIcon /><span>Вставить</span><span><Caret /></span></BigTool>
          <BigTool $w={42}><DeleteIcon /><span>Удалить</span><span><Caret /></span></BigTool>
          <BigTool $w={39}><FormatIcon /><span>Формат</span><span><Caret /></span></BigTool>
        </GroupBody>
        <GroupLabel><span>Ячейки</span></GroupLabel>
      </Group>

      <Group $w={201}>
        <GroupBody $top={3}>
          <Divider $h={0} />
          <Stack $gap={0}>
            <EditButton $w={76}><SumIcon />Автосумма<Caret /></EditButton>
            <EditButton $w={76}><DownIcon />Заполнить<Caret /></EditButton>
            <EditButton $w={76}><EraserIcon />Очистить<Caret /></EditButton>
          </Stack>
          <BigTool $w={60}>
            <SortIcon />
            <span>Сортировка</span>
            <span>и фильтр<Caret /></span>
          </BigTool>
          <BigTool $w={54}>
            <FindIcon />
            <span>Найти и</span>
            <span>выделить<Caret /></span>
          </BigTool>
        </GroupBody>
        <GroupLabel><span>Редактирование</span></GroupLabel>
      </Group>
    </Ribbon>
  );
}

export default function App() {
  return (
    <Window>
      <GlobalStyle />
      <TabBar>
        <FileTab>Файл</FileTab>
        <Tab $active>Главная</Tab>
        <Tab>Вставка</Tab>
        <Tab>Разметка страницы</Tab>
        <Tab>Формулы</Tab>
        <Tab>Данные</Tab>
        <Tab>Рецензирование</Tab>
        <Tab>Вид</Tab>
        <Tab>Разработчик</Tab>
        <TellMe><Bulb />Что вы хотите сделать?</TellMe>
        <Spacer />
        <Tab>Вход</Tab>
        <Share><Person />Общий доступ</Share>
      </TabBar>

      <RibbonGroups />

      <FormulaBar>
        <NameBox $w={76}>
          <input aria-label="Имя" defaultValue="AJ2" />
          <Caret />
        </NameBox>
        <Dots><i /><i /><i /></Dots>
        <FxButtons $w={90}>
          <Tool aria-label="Отмена">
            <svg width="11" height="10" viewBox="0 0 11 10" stroke="#bbb" strokeWidth="1.500"><path d="M1 .5l9 9M10 .5l-9 9" /></svg>
          </Tool>
          <Tool aria-label="Ввод">
            <svg width="12" height="10" viewBox="0 0 12 10" fill="none" stroke="#bbb" strokeWidth="2"><path d="M1 5.500L4 8.500 11 1" /></svg>
          </Tool>
          <Tool aria-label="Вставить функцию">
            <svg width="12" height="14" viewBox="0 0 12 14" fill="none" stroke="#555" strokeWidth="1.200">
              <path d="M9 1C7 0 6 1 5.500 4L4 11c-.5 2-1.500 2.500-3 2M2.500 5h5M6.500 7.500c1.500-.5 2 0 2.500 2s1 2.500 2 2M11.500 7.500l-5 4.500" />
            </svg>
          </Tool>
        </FxButtons>
        <Box>
          <input aria-label="Строка формул" defaultValue="65%" />
        </Box>
      </FormulaBar>

      <Sheet>
        <SheetGrid />
        <Shape $x={204} $y={23} $w={98} $h={35} $r={5}>{"SCARICA\nPALINSESTO"}</Shape>
        <Shape $x={208} $y={77} $w={83} $h={15} $r={2}>RESET FILTRI</Shape>
        <Shape $x={217} $y={123} $w={62} $h={27} $r={4}>RISULTATI</Shape>
        <Spinner $x={335} $y={62} $h={50}>
          <button aria-label="Data successiva"><Arrow /></button>
          <button aria-label="Data precedente"><Arrow down /></button>
        </Spinner>
        <Spinner $x={399} $y={17} $h={52}>
          <button aria-label="Aumenta giornate"><Arrow /></button>
          <button aria-label="Diminuisci giornate"><Arrow down /></button>
        </Spinner>
      </Sheet>

      <Dialog role="dialog" aria-labelledby="dialog-title">
        <DialogTitle id="dialog-title">Microsoft Visual Basic</DialogTitle>
        <DialogBody>
          <p>Run-time error '13':</p>
          <p>Type mismatch</p>
          <DialogButtons>
            <DialogButton disabled>Continue</DialogButton>
            <DialogButton>End</DialogButton>
            <DialogButton>Debug</DialogButton>
            <DialogButton>Help</DialogButton>
          </DialogButtons>
        </DialogBody>
      </Dialog>
    </Window>
  );
}
